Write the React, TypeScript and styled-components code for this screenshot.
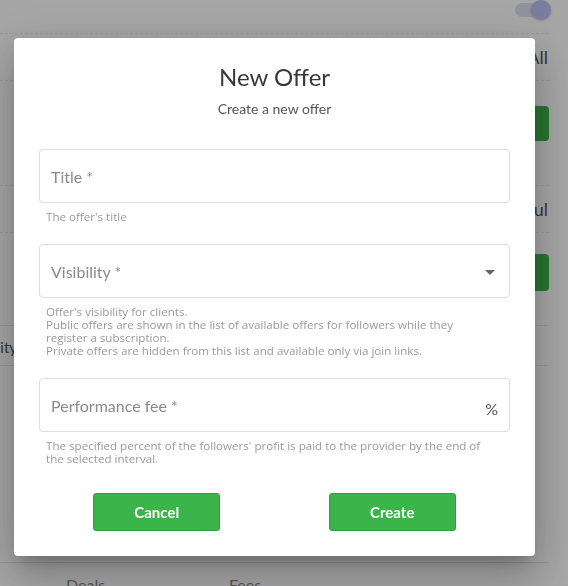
import React from "react";
import styled, { createGlobalStyle } from "styled-components";

const Global = createGlobalStyle`
  html, body { margin: 0; padding: 0; background: #ffffff; }
  body { font-family: Lato, "Noto Sans", sans-serif; width: 568px; height: 586px; overflow: hidden; }
  * { box-sizing: border-box; }
`;

/* ---------- background page ---------- */
const Page = styled.div`
  width: 568px;
  padding-right: 19px;
  display: flex;
  flex-direction: column;
  color: #777;
  font-size: 15px;
`;

const Row = styled.div<{ $h: number; $line?: "dashed" | "solid" | "none"; $align?: string; $justify?: string }>`
  height: ${(p) => p.$h}px;
  display: flex;
  align-items: ${(p) => p.$align || "center"};
  justify-content: ${(p) => p.$justify || "flex-end"};
  border-bottom: ${(p) => (p.$line === "none" ? "none" : `1px ${p.$line || "dashed"} #e8e8e8`)};
`;

const SwitchTrack = styled.div`
  position: relative;
  width: 34px;
  height: 14px;
  margin-top: 3px;
  border-radius: 7px;
  background: #dfe1f3;
`;

const SwitchThumb = styled.div`
  position: absolute;
  right: -2px;
  top: -3px;
  width: 20px;
  height: 20px;
  border-radius: 50%;
  background: #bcc1f2;
  box-shadow: 0 1px 3px rgba(0, 0, 0, 0.2);
`;

const BgText = styled.span`
  color: #555;
  font-size: 18px;
  margin-right: 1px;
`;

const BgButton = styled.div<{ $mt: number; $h: number }>`
  width: 120px;
  height: ${(p) => p.$h}px;
  margin-top: ${(p) => p.$mt}px;
  border-radius: 4px;
  background: #3bb54a;
`;

const ClipCell = styled.div`
  width: 17px;
  margin-top: 3px;
  overflow: hidden;
  display: flex;
  justify-content: flex-end;
  white-space: nowrap;
  color: #555;
  font-size: 15px;
`;

const FooterRow = styled.div`
  display: flex;
  padding-top: 12px;
  padding-left: 66px;
  color: #888;
  font-size: 16px;
`;

const FooterCell = styled.span`
  width: 163px;
`;

/* ---------- overlay + dialog ---------- */
const Overlay = styled.div`
  position: fixed;
  inset: 0;
  background: rgba(0, 0, 0, 0.35);
`;

const Dialog = styled.div`
  position: fixed;
  left: 14px;
  top: 38px;
  width: 521px;
  background: #fff;
  border-radius: 4px;
  padding: 22px 25px 25px;
  display: flex;
  flex-direction: column;
  box-shadow: 0 11px 15px -7px rgba(0, 0, 0, 0.2), 0 24px 38px 3px rgba(0, 0, 0, 0.14),
    0 9px 46px 8px rgba(0, 0, 0, 0.12);
  font-family: Lato, "Noto Sans", sans-serif;
`;

const Heading = styled.h2`
  margin: 0;
  text-align: center;
  font-size: 24px;
  line-height: 34px;
  font-weight: 400;
  color: #383838;
`;

const Sub = styled.p`
  margin: 5px 0 0;
  text-align: center;
  font-size: 14px;
  line-height: 20px;
  color: #555;
`;

const Form = styled.div`
  margin-top: 30px;
  display: flex;
  flex-direction: column;
`;

const Field = styled.div<{ $mt?: number }>`
  margin-top: ${(p) => p.$mt ?? 0}px;
  display: flex;
  flex-direction: column;
`;

const InputBox = styled.div`
  height: 54px;
  border: 1px solid #dedede;
  border-radius: 4px;
  display: flex;
  align-items: center;
  padding: 0 11px 0 11px;
`;

const Placeholder = styled.span`
  flex: 1;
  font-size: 16px;
  color: #8a8a8a;
`;

const Adornment = styled.span`
  font-size: 16px;
  color: #555;
  margin-top: 7px;
`;

const Arrow = styled.svg`
  width: 10px;
  height: 5px;
  margin: 3px 3px 0 0;
`;

const Helper = styled.div`
  margin: 7px 0 0 7px;
  font-family: "Open Sans", Lato, sans-serif;
  font-size: 11.6px;
  line-height: 13px;
  color: #9a9a9a;
  white-space: nowrap;
`;

const Actions = styled.div`
  margin-top: 28px;
  display: grid;
  grid-template-columns: 1fr 1fr;
  justify-items: center;
`;

const GreenButton = styled.button`
  width: 127px;
  height: 38px;
  border: 1px solid #2f9e3d;
  border-radius: 3px;
  background: #3bb54a;
  color: #fff;
  font-family: Lato, "Noto Sans", sans-serif;
  font-size: 15px;
  font-weight: 700;
  cursor: pointer;
`;

export default function App() {
  return (
    <>
      <Global />
      <Page>
        <Row $h={34} $align="flex-start">
          <SwitchTrack>
            <SwitchThumb />
          </SwitchTrack>
        </Row>
        <Row $h={47}>
          <BgText>All</BgText>
        </Row>
        <Row $h={105} $align="flex-start">
          <BgButton $mt={25} $h={35} />
        </Row>
        <Row $h={47}>
          <BgText>Sokul</BgText>
        </Row>
        <Row $h={93} $line="solid" $align="flex-start">
          <BgButton $mt={21} $h={37} />
        </Row>
        <Row $h={40} $line="solid" $justify="flex-start">
          <ClipCell>Visibility</ClipCell>
        </Row>
        <Row $h={197} $line="solid" />
        <FooterRow>
          <FooterCell>Deals</FooterCell>
          <FooterCell>Fees</FooterCell>
        </FooterRow>
      </Page>
      <Overlay />
      <Dialog>
        <Heading>New Offer</Heading>
        <Sub>Create a new offer</Sub>
        <Form>
          <Field>
            <InputBox>
              <Placeholder>Title *</Placeholder>
            </InputBox>
            <Helper>The offer's title</Helper>
          </Field>
          <Field $mt={21}>
            <InputBox>
              <Placeholder>Visibility *</Placeholder>
              <Arrow viewBox="0 0 10 5">
                <path d="M0 0 L10 0 L5 5 Z" fill="#666" />
              </Arrow>
            </InputBox>
            <Helper>
              Offer's visibility for clients.
              <br />
              Public offers are shown in the list of available offers for followers while they
              <br />
              register a subscription.
              <br />
              Private offers are hidden from this list and available only via join links.
            </Helper>
          </Field>
          <Field $mt={21}>
            <InputBox>
              <Placeholder>Performance fee *</Placeholder>
              <Adornment>%</Adornment>
            </InputBox>
            <Helper>
              The specified percent of the followers' profit is paid to the provider by the end of
              <br />
              the selected interval.
            </Helper>
          </Field>
        </Form>
        <Actions>
          <GreenButton>Cancel</GreenButton>
          <GreenButton>Create</GreenButton>
        </Actions>
      </Dialog>
    </>
  );
}
